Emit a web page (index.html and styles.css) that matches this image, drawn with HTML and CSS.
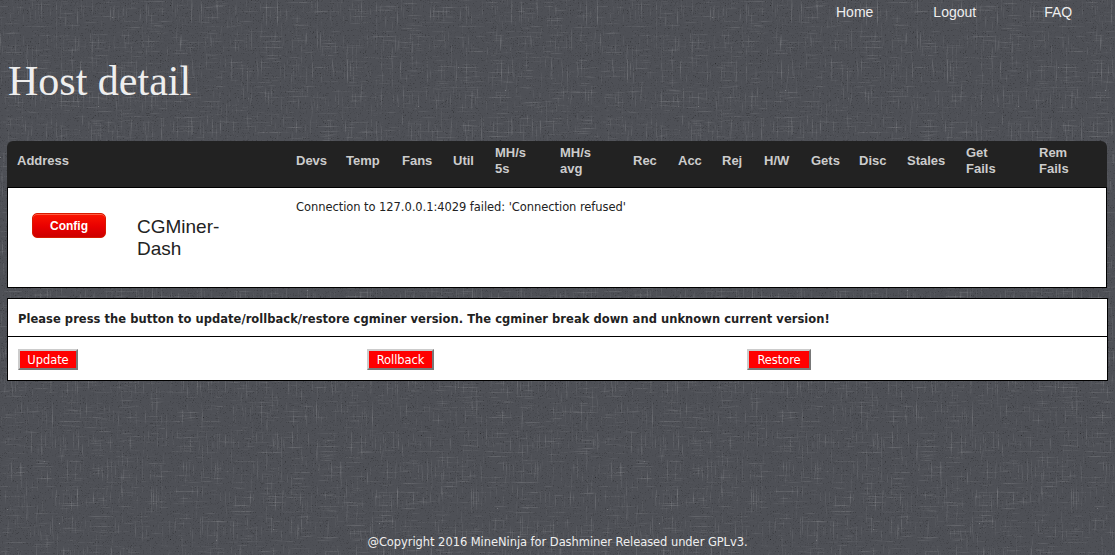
FILE: index.html
```html
<!DOCTYPE html>
<html lang="en">
<head>
    <meta charset="UTF-8">
    <meta name="viewport" content="width=device-width, initial-scale=1.0">
    <title>Host detail</title>
    <link rel="stylesheet" href="styles.css">
</head>
<body>

    <div class="nav">
        <a class="nav-home" href="#">Home</a>
        <a class="nav-logout" href="#">Logout</a>
        <a class="nav-faq" href="#">FAQ</a>
    </div>

    <h1>Host detail</h1>

    <table class="host-table">
        <colgroup>
            <col class="c-address">
            <col class="c-devs">
            <col class="c-temp">
            <col class="c-fans">
            <col class="c-util">
            <col class="c-mh5">
            <col class="c-mhavg">
            <col class="c-rec">
            <col class="c-acc">
            <col class="c-rej">
            <col class="c-hw">
            <col class="c-gets">
            <col class="c-disc">
            <col class="c-stales">
            <col class="c-getfails">
            <col class="c-remfails">
        </colgroup>
        <thead>
            <tr>
                <th>Address</th>
                <th>Devs</th>
                <th>Temp</th>
                <th>Fans</th>
                <th>Util</th>
                <th>MH/s<br>5s</th>
                <th>MH/s<br>avg</th>
                <th>Rec</th>
                <th>Acc</th>
                <th>Rej</th>
                <th>H/W</th>
                <th>Gets</th>
                <th>Disc</th>
                <th>Stales</th>
                <th>Get<br>Fails</th>
                <th>Rem<br>Fails</th>
            </tr>
        </thead>
        <tbody>
            <tr>
                <td class="host-cell">
                    <div class="host-info">
                        <a class="config-btn" href="#">Config</a>
                        <span class="host-name">CGMiner-Dash</span>
                    </div>
                </td>
                <td class="host-msg" colspan="15">Connection to 127.0.0.1:4029 failed: 'Connection refused'</td>
            </tr>
        </tbody>
    </table>

    <div class="update-box">
        <div class="update-title">Please press the button to update/rollback/restore cgminer version. The cgminer break down and unknown current version!</div>
        <div class="update-actions">
            <button class="red-btn btn-update">Update</button>
            <button class="red-btn btn-rollback">Rollback</button>
            <button class="red-btn btn-restore">Restore</button>
        </div>
    </div>

    <div class="footer">@Copyright 2016 MineNinja for Dashminer Released under GPLv3.</div>

</body>
</html>
```

FILE: styles.css
```css
html, body {
    height: 100%;
}
body {
    margin: 0;
    box-sizing: border-box;
    height: 555px;
    overflow: hidden;
    display: flex;
    flex-direction: column;
    padding: 0 7px;
    color: #222;
    font-family: "DejaVu Sans", sans-serif;
    font-size: 11.5px;
    letter-spacing: -0.06px;
    background-color: #4e5056;
    /* linen texture, vertical and horizontal threads */
    background-image: url("data:image/svg+xml,%3Csvg xmlns='http://www.w3.org/2000/svg' width='600' height='600'%3E%3Cfilter id='v' x='0' y='0' width='100%25' height='100%25' color-interpolation-filters='sRGB'%3E%3CfeTurbulence baseFrequency='0.8 0.035' numOctaves='2' seed='3' stitchTiles='stitch'/%3E%3CfeColorMatrix values='0 0 0 0 1 0 0 0 0 1 0 0 0 0 1 0.4 0 0 0 -0.16'/%3E%3C/filter%3E%3Cfilter id='h' x='0' y='0' width='100%25' height='100%25' color-interpolation-filters='sRGB'%3E%3CfeTurbulence baseFrequency='0.035 0.8' numOctaves='2' seed='8' stitchTiles='stitch'/%3E%3CfeColorMatrix values='0 0 0 0 1 0 0 0 0 1 0 0 0 0 1 0.35 0 0 0 -0.14'/%3E%3C/filter%3E%3Cfilter id='d' x='0' y='0' width='100%25' height='100%25' color-interpolation-filters='sRGB'%3E%3CfeTurbulence baseFrequency='0.6 0.6' numOctaves='2' seed='5' stitchTiles='stitch'/%3E%3CfeColorMatrix values='0 0 0 0 0 0 0 0 0 0 0 0 0 0 0 0.7 0 0 0 -0.26'/%3E%3C/filter%3E%3Crect width='600' height='600' filter='url(%23d)'/%3E%3Crect width='600' height='600' filter='url(%23v)'/%3E%3Crect width='600' height='600' filter='url(%23h)'/%3E%3C/svg%3E");
}

.nav {
    display: flex;
    height: 24px;
    align-items: center;
    font-family: "Liberation Sans", sans-serif;
    font-size: 14px;
    letter-spacing: 0;
}
.nav a {
    color: #eee;
    text-decoration: none;
}
.nav-home {
    margin-left: 829px;
}
.nav-logout {
    margin-left: 60px;
}
.nav-faq {
    margin-left: 68px;
}

h1 {
    margin: 33px 0 0 1px;
    height: 84px;
    color: #eee;
    font-family: "Liberation Serif", serif;
    font-size: 42px;
    font-weight: normal;
    letter-spacing: 0;
    line-height: 48px;
}

.host-table {
    width: 1100px;
    table-layout: fixed;
    border-collapse: separate;
    border-spacing: 0;
}
.c-address { width: 279px; }
.c-devs { width: 50px; }
.c-temp { width: 56px; }
.c-fans { width: 51px; }
.c-util { width: 42px; }
.c-mh5 { width: 65px; }
.c-mhavg { width: 73px; }
.c-rec { width: 45px; }
.c-acc { width: 44px; }
.c-rej { width: 42px; }
.c-hw { width: 47px; }
.c-gets { width: 48px; }
.c-disc { width: 48px; }
.c-stales { width: 59px; }
.c-getfails { width: 73px; }
.c-remfails { width: 78px; }

.host-table th {
    box-sizing: border-box;
    height: 46px;
    padding: 0 0 6px 10px;
    background: #222;
    color: #ccc;
    font-family: "Liberation Sans", sans-serif;
    font-size: 13px;
    line-height: 16px;
    font-weight: bold;
    letter-spacing: 0;
    text-align: left;
}
.host-table th:first-child {
    border-top-left-radius: 6px;
}
.host-table th:last-child {
    border-top-right-radius: 6px;
}
.host-table td {
    box-sizing: border-box;
    height: 101px;
    background: #fff;
    border-top: 1px solid #000;
    border-bottom: 1px solid #000;
    vertical-align: top;
}
.host-cell {
    border-left: 1px solid #000;
    padding: 0;
}
.host-msg {
    border-right: 1px solid #000;
    padding: 11px 0 0 10px;
    line-height: 16px;
}
.host-info {
    display: flex;
    align-items: flex-start;
    padding: 25px 0 0 24px;
}
.config-btn {
    box-sizing: border-box;
    width: 74px;
    height: 25px;
    border: 1px solid #d81a00;
    border-radius: 5px;
    background: linear-gradient(#fb1500, #e80000 55%, #cc0000);
    box-shadow: inset 0 1px 0 #ff5a40;
    color: #fff;
    font-family: "Liberation Sans", sans-serif;
    font-size: 12px;
    font-weight: bold;
    letter-spacing: 0;
    line-height: 24px;
    text-align: center;
    text-decoration: none;
}
.host-name {
    width: 100px;
    margin: 3px 0 0 31px;
    color: #222;
    font-family: "Liberation Sans", sans-serif;
    font-size: 19px;
    letter-spacing: 0;
    line-height: 22px;
}

.update-box {
    width: 1101px;
    box-sizing: border-box;
    margin-top: 10px;
    background: #fff;
    border: 1px solid #000;
}
.update-title {
    height: 37px;
    padding-left: 10px;
    border-bottom: 1px solid #000;
    font-weight: bold;
    letter-spacing: 0.04px;
    line-height: 40px;
}
.update-actions {
    display: flex;
    align-items: flex-start;
    height: 43px;
    padding: 12px 0 0 10px;
    box-sizing: border-box;
}
.red-btn {
    box-sizing: border-box;
    height: 21px;
    padding: 0;
    border: 2px outset #ccc;
    background: #f00;
    color: #fff;
    font-family: "DejaVu Sans", sans-serif;
    font-size: 11.5px;
    letter-spacing: -0.06px;
}
.btn-update {
    width: 60px;
}
.btn-rollback {
    width: 67px;
    margin-left: 289px;
}
.btn-restore {
    width: 64px;
    margin-left: 313px;
}

.footer {
    margin-top: auto;
    padding-bottom: 5px;
    color: #eee;
    line-height: 16px;
    text-align: center;
}
```
